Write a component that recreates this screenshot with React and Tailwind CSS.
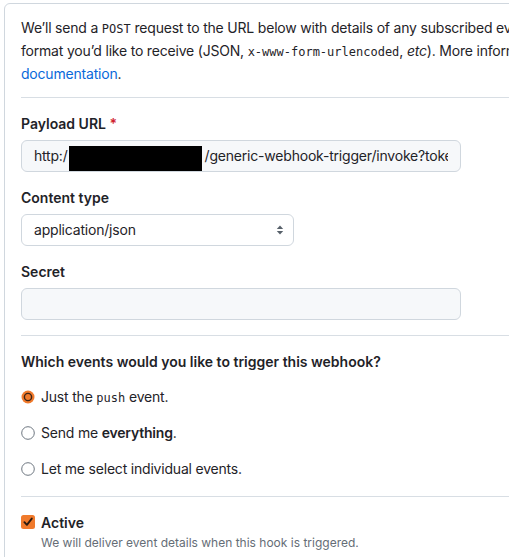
import React from "react";

const sans = "font-['Inter','Liberation_Sans',sans-serif]";
const mono = "font-['DejaVu_Sans_Mono','Liberation_Mono',monospace]";

function Radio({ checked }) {
  if (checked) {
    return (
      <svg width="14" height="14" viewBox="0 0 14 14" className="shrink-0">
        <circle cx="7" cy="7" r="6.5" fill="#f07a2c" />
        <circle cx="7" cy="7" r="3.6" fill="#f07a2c" stroke="#3b2418" strokeWidth="1.4" />
      </svg>
    );
  }
  return (
    <svg width="14" height="14" viewBox="0 0 14 14" className="shrink-0">
      <circle cx="7" cy="7" r="6.3" fill="#ffffff" stroke="#6e7781" strokeWidth="1" />
    </svg>
  );
}

function Check() {
  return (
    <svg width="14" height="14" viewBox="0 0 14 14" className="shrink-0">
      <rect x="0" y="0" width="14" height="14" rx="2.5" fill="#f07a2c" />
      <path d="M3.4 7.2 L5.9 9.8 L10.8 3.6" fill="none" stroke="#2a1a10" strokeWidth="1.9" strokeLinecap="round" strokeLinejoin="round" />
    </svg>
  );
}

function Divider() {
  return <div className="h-px bg-[#d8dee4]" />;
}

export default function App() {
  return (
    <div className={`w-[509px] h-[557px] overflow-hidden bg-white pl-[4px] pt-[3px] ${sans} text-[#1f2328]`}>
      <div className="w-[700px] border border-[#d0d7de] rounded-md pl-4 pt-[13px] pb-10">
        <p className="text-sm leading-[21px] whitespace-nowrap tracking-[-0.2px]">
          We’ll send a <code className={`${mono} text-[12px] tracking-normal`}>POST</code> request to the URL below with details of any subscribed events. You can also specify which data
          <br />
          format you’d like to receive (JSON, <code className={`${mono} text-[12px] tracking-normal`}>x-www-form-urlencoded</code>, <em>etc</em>). More information can be found in our developer
          <br />
          <a className="text-[#0969da]">documentation</a>.
        </p>

        <div className="mt-[13px]">
          <Divider />
        </div>

        <div className="mt-[15px] text-sm leading-[21px] font-semibold">
          Payload URL <span className="text-[#cf222e]">*</span>
        </div>
        <div className="mt-[6px] w-[440px] h-[32px] rounded-md border border-[#d0d7de] bg-[#f6f8fa] flex items-center px-3 text-sm tracking-[-0.2px]">
          <div className="flex-1 flex items-center overflow-hidden whitespace-nowrap">
            <span className="shrink-0">http:/</span>
            <span className="shrink-0 inline-block w-[133px] h-[25px] bg-black mt-[4px] ml-[1px]" />
            <span className="shrink-0 ml-[3px]">/generic-webhook-trigger/invoke?token=abcdef</span>
          </div>
        </div>

        <div className="mt-[15px] text-sm leading-[21px] font-semibold">Content type</div>
        <div className="mt-[6px] w-[273px] h-[32px] rounded-md border border-[#d0d7de] bg-white flex items-center pl-3 pr-[9px] text-sm tracking-[-0.2px]">
          <span className="flex-1">application/json</span>
          <svg width="8" height="12" viewBox="0 0 8 12">
            <path d="M4 1.5 L7.2 5 L0.8 5 Z" fill="#57606a" />
            <path d="M4 10.5 L7.2 7 L0.8 7 Z" fill="#57606a" />
          </svg>
        </div>

        <div className="mt-[15px] text-sm leading-[21px] font-semibold">Secret</div>
        <div className="mt-[6px] w-[440px] h-[32px] rounded-md border border-[#d0d7de] bg-[#f6f8fa]" />

        <div className="mt-[15px]">
          <Divider />
        </div>

        <div className="mt-[15px] text-sm leading-[21px] font-semibold">
          Which events would you like to trigger this webhook?
        </div>

        <div className="mt-[14px] flex flex-col gap-[15px] tracking-[-0.2px]">
          <label className="flex items-center gap-[6px] text-sm leading-[21px] h-[21px]">
            <Radio checked />
            <span>
              Just the <code className={`${mono} text-[12px] leading-none tracking-normal`}>push</code> event.
            </span>
          </label>
          <label className="flex items-center gap-[6px] text-sm leading-[21px] h-[21px]">
            <Radio />
            <span>
              Send me <strong className="font-semibold">everything</strong>.
            </span>
          </label>
          <label className="flex items-center gap-[6px] text-sm leading-[21px] h-[21px]">
            <Radio />
            <span>Let me select individual events.</span>
          </label>
        </div>

        <div className="mt-[17px]">
          <Divider />
        </div>

        <div className="mt-[15px] flex items-start gap-[6px]">
          <div className="mt-[3px]">
            <Check />
          </div>
          <div>
            <div className="text-sm leading-[21px] font-semibold">Active</div>
            <div className="mt-[1px] text-xs leading-[18px] text-[#656d76]">
              We will deliver event details when this hook is triggered.
            </div>
          </div>
        </div>
      </div>
    </div>
  );
}
